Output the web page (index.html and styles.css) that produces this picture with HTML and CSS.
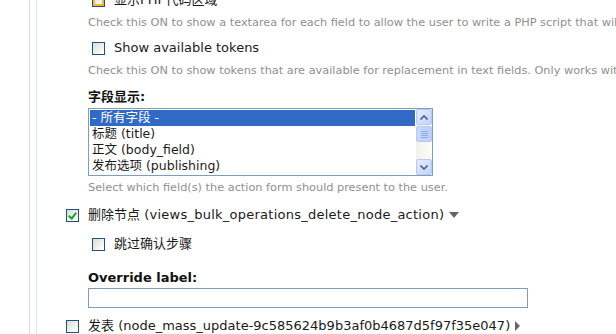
FILE: index.html
```html
<!DOCTYPE html>
<html lang="zh-CN">
<head>
  <meta charset="UTF-8">
  <title>Views Bulk Operations - 操作设置</title>
  <link rel="stylesheet" href="styles.css">
</head>
<body>
  <div class="rail">
    <div class="panel">

      <div class="sub">
        <label class="opt"><input type="checkbox" class="cb hover"><span>显示PHP代码区域</span></label>
        <div class="desc">Check this ON to show a textarea for each field to allow the user to write a PHP script that will populate the value of this field.</div>

        <label class="opt gap-opt"><input type="checkbox" class="cb"><span>Show available tokens</span></label>
        <div class="desc">Check this ON to show tokens that are available for replacement in text fields. Only works with the default form.</div>

        <div class="field-title">字段显示:</div>
        <div class="listbox">
          <div class="options">
            <div class="option selected">- 所有字段 -</div>
            <div class="option">标题 <span class="mach">(title)</span></div>
            <div class="option">正文 <span class="mach">(body_field)</span></div>
            <div class="option">发布选项 <span class="mach">(publishing)</span></div>
          </div>
          <div class="scrollbar">
            <div class="sb-btn">
              <svg width="8" height="5" viewBox="0 0 8 5"><path d="M0.5 4.5 L4 1 L7.5 4.5" fill="none" stroke="#4d6185" stroke-width="1.6"/></svg>
            </div>
            <div class="sb-thumb"><span></span><span></span><span></span><span></span></div>
            <div class="sb-track"></div>
            <div class="sb-btn">
              <svg width="8" height="5" viewBox="0 0 8 5"><path d="M0.5 0.5 L4 4 L7.5 0.5" fill="none" stroke="#4d6185" stroke-width="1.6"/></svg>
            </div>
          </div>
        </div>
        <div class="desc desc-select">Select which field(s) the action form should present to the user.</div>
      </div>

      <label class="opt top-opt"><input type="checkbox" class="cb" checked><span>删除节点 <span class="mach wide">(views_bulk_operations_delete_node_action)</span></span><span class="arrow-down"></span></label>

      <div class="sub">
        <label class="opt nested"><input type="checkbox" class="cb"><span>跳过确认步骤</span></label>
        <div class="field-title override">Override label:</div>
        <input type="text" class="text-input">
      </div>

      <label class="opt top-opt last"><input type="checkbox" class="cb"><span>发表 <span class="mach">(node_mass_update-9c585624b9b3af0b4687d5f97f35e047)</span></span><span class="arrow-right"></span></label>

    </div>
  </div>
</body>
</html>
```

FILE: styles.css
```css
body { margin: 0; background: #fff; color: #1a1a1a; font-family: "DejaVu Sans", Verdana, "Noto Sans CJK SC", sans-serif; font-size: 13px; overflow: hidden; }

.rail { margin-left: 29px; border-left: 1px solid #dcdcdc; height: 334px; }
.panel { margin-left: 6px; border-left: 1px solid #d8e6f4; height: 334px; padding-left: 29px; overflow: hidden; }
.panel > :first-child { margin-top: -8px; }

.sub { margin-left: 22px; }

.opt { display: flex; align-items: center; height: 16px; line-height: 16px; white-space: nowrap; }
.opt .cb { margin: 0 9px 0 4px; }
.top-opt .cb { margin: 0 9px 0 0; }
.gap-opt { margin-top: 11px; }
.top-opt { margin-top: 13px; }
.nested { margin-top: 13px; }
.last { margin-top: 10px; }
.opt .wide { letter-spacing: 0.25px; }

.cb { appearance: none; -webkit-appearance: none; width: 13px; height: 13px; flex: none; box-sizing: border-box; border: 1px solid #1c5180; background: linear-gradient(135deg, #dcdcd7 0%, #f2f2ee 60%, #fff 100%); position: relative; }
.cb.hover { box-shadow: inset 0 0 0 2px #f8b33a; }
.cb:checked::after { content: ""; position: absolute; left: 3px; top: 1px; width: 3px; height: 6px; border: solid #21a121; border-width: 0 2px 2px 0; transform: rotate(40deg); }

.desc { font-size: 11.3px; line-height: 13px; color: #8f8f8f; margin-top: 8px; white-space: nowrap; }
.desc-select { margin-top: 5px; }

.field-title { font-weight: bold; line-height: 16px; margin-top: 12px; color: #111; }
.override { margin-top: 18px; }

.listbox { display: flex; width: 345px; height: 68px; box-sizing: border-box; border: 1px solid #7f9db9; margin-top: 3px; background: #fff; }
.options { flex: 1; padding: 1px; }
.option { height: 16px; line-height: 16px; font-size: 12.5px; padding-left: 2px; white-space: nowrap; }
.option.selected { background: #316ac5; color: #fff; }

.scrollbar { width: 16px; display: flex; flex-direction: column; background: linear-gradient(90deg, #f3f1ea, #fdfdfa); }
.sb-btn { height: 16px; box-sizing: border-box; border: 1px solid #b8c9ef; border-radius: 2px; background: linear-gradient(135deg, #e4ecfd, #c2d3fc); display: flex; align-items: center; justify-content: center; }
.sb-thumb { height: 16px; margin-top: 1px; box-sizing: border-box; border: 1px solid #b8c9ef; border-radius: 2px; background: linear-gradient(90deg, #c9d8fc, #bccffb); display: flex; flex-direction: column; align-items: center; justify-content: center; gap: 1px; }
.sb-thumb span { width: 7px; height: 1px; background: #8faaec; }
.sb-track { flex: 1; }

.text-input { display: block; width: 440px; height: 20px; box-sizing: border-box; border: 1px solid #7f9db9; margin: 2px 0 0; padding: 0 3px; }

.arrow-down { display: inline-block; width: 0; height: 0; border-left: 5px solid transparent; border-right: 5px solid transparent; border-top: 6px solid #666; margin-left: 5px; }
.arrow-right { display: inline-block; width: 0; height: 0; border-top: 5px solid transparent; border-bottom: 5px solid transparent; border-left: 5px solid #666; margin-left: 5px; }
```
